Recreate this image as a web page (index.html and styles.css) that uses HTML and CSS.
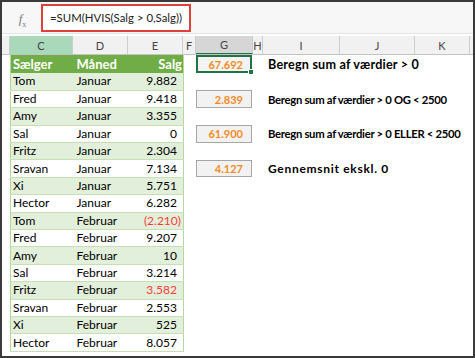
FILE: index.html
```html
<!DOCTYPE html>
<html lang="da">
<head>
  <meta charset="UTF-8">
  <title>Salg</title>
  <link rel="stylesheet" href="styles.css">
</head>
<body>
  <div class="frame">
    <div class="formula-bar">
      <span class="fx"><i>f</i><sub>x</sub></span>
      <div class="formula">=SUM(HVIS(Salg &gt; 0,Salg))</div>
    </div>

    <div class="col-heads">
      <div class="ch w-row"></div>
      <div class="ch w-c picked">C</div>
      <div class="ch w-d">D</div>
      <div class="ch w-e">E</div>
      <div class="ch w-f">F</div>
      <div class="ch w-g active-col">G</div>
      <div class="ch w-h">H</div>
      <div class="ch w-i">I</div>
      <div class="ch w-j">J</div>
      <div class="ch w-k">K</div>
      <div class="ch rest"></div>
    </div>

    <div class="sheet">
      <table class="sales">
        <tr class="head"><td>Sælger</td><td>Måned</td><td class="num">Salg</td></tr>
        <tr><td>Tom</td><td>Januar</td><td class="num">9.882</td></tr>
        <tr><td>Fred</td><td>Januar</td><td class="num">9.418</td></tr>
        <tr><td>Amy</td><td>Januar</td><td class="num">3.355</td></tr>
        <tr><td>Sal</td><td>Januar</td><td class="num">0</td></tr>
        <tr><td>Fritz</td><td>Januar</td><td class="num">2.304</td></tr>
        <tr><td>Sravan</td><td>Januar</td><td class="num">7.134</td></tr>
        <tr><td>Xi</td><td>Januar</td><td class="num">5.751</td></tr>
        <tr><td>Hector</td><td>Januar</td><td class="num">6.282</td></tr>
        <tr><td>Tom</td><td>Februar</td><td class="num neg">(2.210)</td></tr>
        <tr><td>Fred</td><td>Februar</td><td class="num">9.207</td></tr>
        <tr><td>Amy</td><td>Februar</td><td class="num">10</td></tr>
        <tr><td>Sal</td><td>Februar</td><td class="num">3.214</td></tr>
        <tr><td>Fritz</td><td>Februar</td><td class="num red">3.582</td></tr>
        <tr><td>Sravan</td><td>Februar</td><td class="num">2.553</td></tr>
        <tr><td>Xi</td><td>Februar</td><td class="num">525</td></tr>
        <tr><td>Hector</td><td>Februar</td><td class="num">8.057</td></tr>
      </table>

      <div class="result row-1 selected">67.692<span class="handle"></span></div>
      <div class="note row-1 big">Beregn sum af værdier &gt; 0</div>

      <div class="result row-3">2.839</div>
      <div class="note row-3 small">Beregn sum af værdier &gt; 0 OG &lt; 2500</div>

      <div class="result row-5">61.900</div>
      <div class="note row-5 small">Beregn sum af værdier &gt; 0 ELLER &lt; 2500</div>

      <div class="result row-7">4.127</div>
      <div class="note row-7 spaced">Gennemsnit ekskl. 0</div>
    </div>
  </div>
</body>
</html>
```

FILE: styles.css
```css
body {
  margin: 0;
  background: #ffffff;
  font-family: Lato, 'Liberation Sans', sans-serif;
  color: #000000;
}

.frame {
  width: 475px;
  height: 358px;
  box-sizing: border-box;
  border: 2px solid #3a3a3a;
  overflow: hidden;
  background: #ffffff;
}

/* formula bar */
.formula-bar {
  height: 31px;
  background: #f7f7f7;
  border-bottom: 1px solid #e4e4e4;
  display: flex;
  align-items: center;
}

.fx {
  width: 37px;
  text-align: center;
  color: #7a7a7a;
  font-family: 'Liberation Serif', serif;
  font-size: 13px;
  padding-top: 4px;
  padding-left: 2px;
}

.fx sub {
  font-size: 8px;
}

.formula {
  width: 150px;
  height: 28px;
  border: 2px solid #e0403a;
  background: #ffffff;
  display: flex;
  align-items: center;
  padding-left: 7px;
  box-sizing: border-box;
  font-size: 11.4px;
  color: #222222;
  white-space: nowrap;
}

/* column headers */
.col-heads {
  display: flex;
  height: 19px;
  box-sizing: border-box;
  margin-top: 2px;
  background: #f1f1f1;
  border-bottom: 1px solid #c4c4c4;
}

.ch {
  box-sizing: border-box;
  border-right: 1px solid #cdcdcd;
  font-size: 11px;
  color: #444444;
  display: flex;
  align-items: center;
  justify-content: center;
}

.w-row { width: 8px; }
.w-c { width: 63px; }
.w-d { width: 55px; }
.w-e { width: 55px; }
.w-f { width: 13px; }
.w-g { width: 57px; }
.w-h { width: 10px; }
.w-i { width: 77px; }
.w-j { width: 75px; }
.w-k { width: 55px; }
.rest { flex: 1; border-right: none; }

.picked {
  background: #a9d9ba;
}

.active-col {
  background: #d6d6d6;
  border-bottom: 1px solid #217346;
}

/* sheet body */
.sheet {
  display: grid;
  grid-template-columns: 8px 173px 13px 57px 10px 1fr;
  grid-template-rows: 18px repeat(16, 17.4px);
}

.sales {
  grid-column: 2;
  grid-row: 1 / -1;
  border-collapse: collapse;
  table-layout: fixed;
  width: 173px;
  font-size: 12px;
  border-left: 1px solid #b4d89c;
  border-right: 1px solid #b4d89c;
}

.sales td {
  height: 17.4px;
  padding: 0 0 0 3px;
  border-bottom: 1px solid #c6e0b4;
  white-space: nowrap;
  box-sizing: border-box;
  line-height: 14px;
}

.sales td:nth-child(1) { width: 63px; padding-left: 2px; }
.sales td:nth-child(2) { width: 55px; }
.sales td:nth-child(3) { width: 55px; }

.sales tr:nth-child(even) td {
  background: #e2efda;
}

.sales .head td {
  background: #70ad47;
  color: #ffffff;
  font-weight: bold;
  font-size: 13px;
  height: 18px;
  border-bottom: none;
}

.sales .num {
  text-align: right;
  padding-right: 6px;
}

.sales .head .num {
  padding-right: 1px;
}

.sales .neg {
  color: #ff3b3b;
  padding-right: 2px;
}

.sales .red {
  color: #ff3b3b;
}

/* results in column G */
.result {
  grid-column: 4;
  position: relative;
  margin: 0 1px 0 0;
  background: #f2f2f2;
  border: 1px solid #a6a6a6;
  box-sizing: border-box;
  color: #f58a25;
  font-weight: bold;
  font-size: 11px;
  padding-right: 8px;
  display: flex;
  align-items: center;
  justify-content: flex-end;
}

.result.selected {
  border: 2px solid #217346;
  background: #f4f4f4;
  padding-right: 7px;
}

.handle {
  position: absolute;
  right: -4px;
  bottom: -4px;
  width: 4px;
  height: 4px;
  background: #217346;
  border: 1px solid #ffffff;
}

.note {
  grid-column: 6;
  padding-left: 5px;
  display: flex;
  align-items: center;
  font-weight: bold;
  font-size: 12px;
  white-space: nowrap;
}

.note.big {
  font-size: 12.6px;
  letter-spacing: 0.2px;
}

.note.small {
  font-size: 11.3px;
  letter-spacing: -0.3px;
}

.note.spaced {
  letter-spacing: 0.7px;
}

.row-1 { grid-row: 1; }
.row-3 { grid-row: 3; }
.row-5 { grid-row: 5; }
.row-7 { grid-row: 7; }
```
